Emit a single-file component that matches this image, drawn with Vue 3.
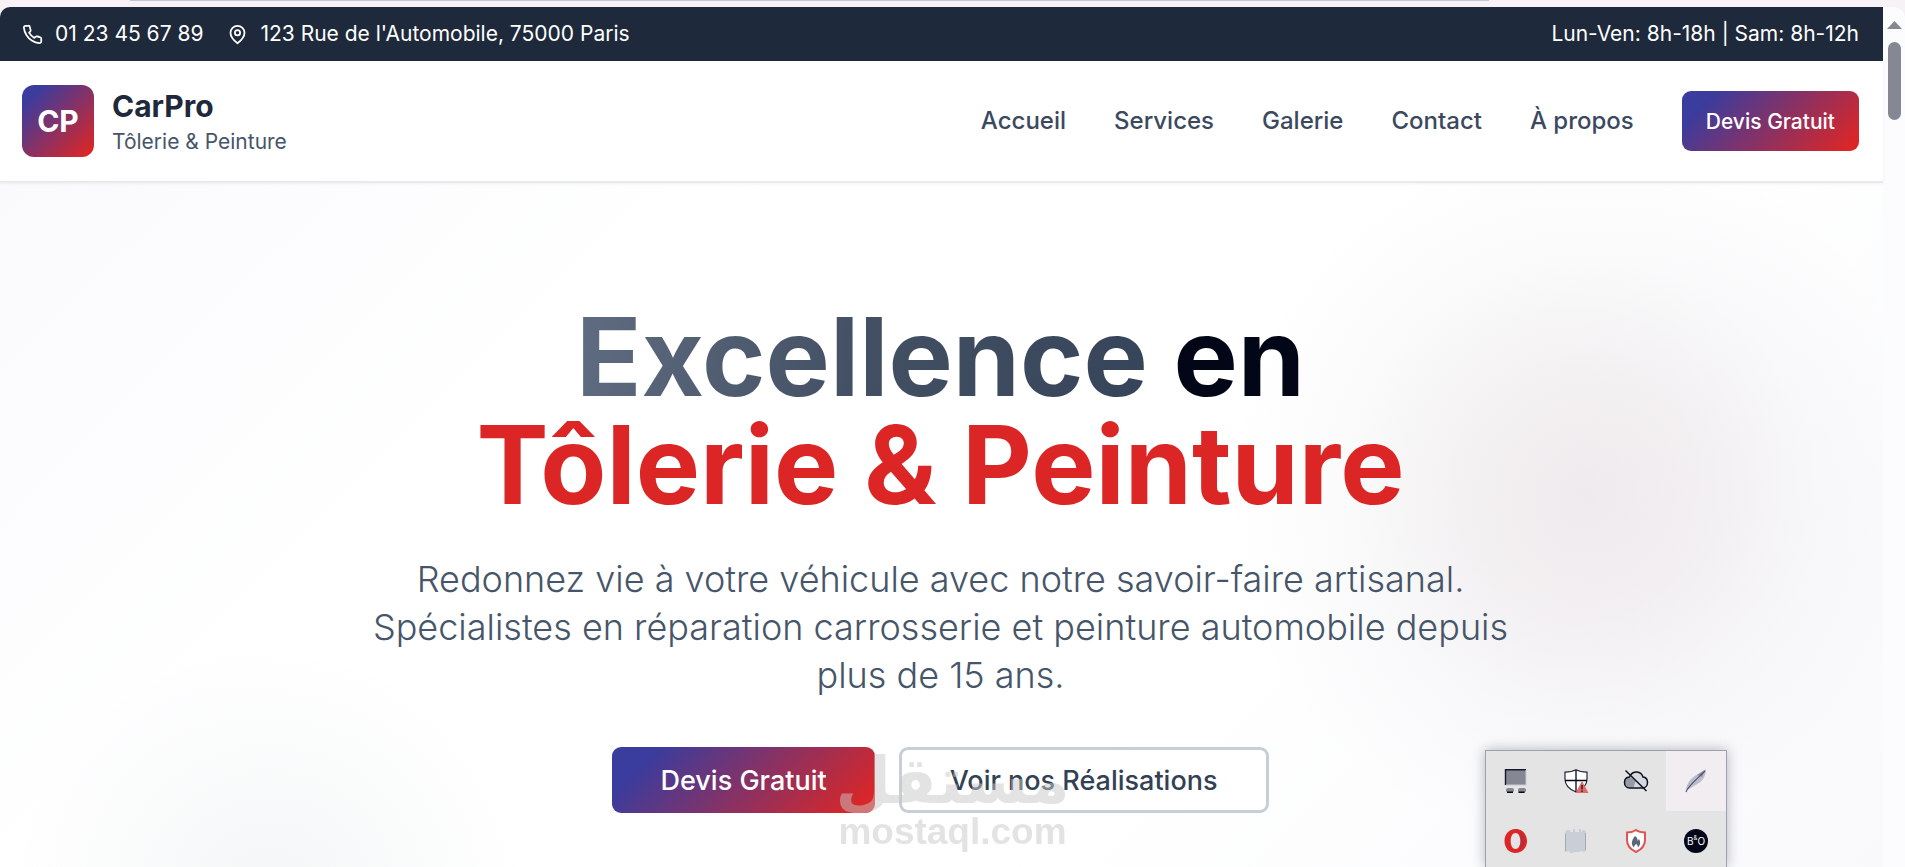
<script setup>
const links = ['Accueil', 'Services', 'Galerie', 'Contact', 'À propos']
</script>

<template>
  <div class="window">
    <div class="chrome"><span class="chrome-line"></span></div>
    <div class="viewport">
      <div class="page">
        <div class="topbar">
          <div class="contact">
            <span class="item">
              <svg class="ico" viewBox="0 0 24 24" aria-hidden="true"><path d="M22 16.92v3a2 2 0 0 1-2.18 2 19.79 19.79 0 0 1-8.63-3.07 19.5 19.5 0 0 1-6-6 19.79 19.79 0 0 1-3.07-8.67A2 2 0 0 1 4.11 2h3a2 2 0 0 1 2 1.72 12.84 12.84 0 0 0 .7 2.81 2 2 0 0 1-.45 2.11L8.09 9.91a16 16 0 0 0 6 6l1.27-1.27a2 2 0 0 1 2.11-.45 12.84 12.84 0 0 0 2.81.7A2 2 0 0 1 22 16.92z" /></svg>
              <span>01 23 45 67 89</span>
            </span>
            <span class="item">
              <svg class="ico" viewBox="0 0 24 24" aria-hidden="true"><path d="M20 10c0 6-8 12-8 12s-8-6-8-12a8 8 0 0 1 16 0Z" /><circle cx="12" cy="10" r="3" /></svg>
              <span>123 Rue de l'Automobile, 75000 Paris</span>
            </span>
          </div>
          <span>Lun-Ven: 8h-18h | Sam: 8h-12h</span>
        </div>

        <header class="header">
          <div class="brand">
            <div class="logo">CP</div>
            <div>
              <div class="name">CarPro</div>
              <div class="tagline">Tôlerie &amp; Peinture</div>
            </div>
          </div>
          <nav class="nav">
            <a v-for="l in links" :key="l" href="#">{{ l }}</a>
            <button class="cta small" type="button">Devis Gratuit</button>
          </nav>
        </header>

        <main class="hero">
          <h1><span class="fade">Excellence</span> en<br /><span class="red">Tôlerie &amp; Peinture</span></h1>
          <p>Redonnez vie à votre véhicule avec notre savoir-faire artisanal. Spécialistes en réparation carrosserie et peinture automobile depuis plus de 15 ans.</p>
          <div class="actions">
            <button class="cta" type="button">Devis Gratuit</button>
            <button class="outline" type="button">Voir nos Réalisations</button>
          </div>
        </main>
      </div>

      <div class="scrollbar" aria-hidden="true">
        <svg class="arrow" viewBox="0 0 15 8"><path d="M7.500 0L15 8H0z" /></svg>
        <div class="thumb"></div>
      </div>
    </div>

    <div class="watermark">
      <div class="wm-ar" lang="ar" dir="rtl">مستقل</div>
      <div class="wm-en">mostaql.com</div>
    </div>

    <div class="tray">
      <div class="cell">
        <svg viewBox="0 0 24 24"><rect x="1" y="0" width="21" height="16" fill="#858792" /><path d="M1.500 16V.7H22" fill="none" stroke="#141a2c" stroke-width="1.400" /><path d="M22 1v15H2" fill="none" stroke="#c6cad3" stroke-width="1" /><rect x="2" y="19" width="8" height="4.500" rx="2" fill="#858792" /><rect x="14" y="19" width="8" height="4.500" rx="2" fill="#858792" /><path d="M3 23.300h6M14.500 23.300h6" stroke="#020617" stroke-width="1.400" /></svg>
      </div>
      <div class="cell">
        <svg viewBox="0 0 24 24"><path d="M12 .8C9 2.500 5 3.200 1 3.200V10c0 6 4.500 10.500 11 13 6.500-2.500 11-7 11-13V3.200C19 3.200 15 2.500 12 .8z" fill="#fff" stroke="#1e293b" stroke-width="1.200" /><path d="M12 1v22M1 11.500h22" stroke="#020617" stroke-width="1.300" /><path d="M18 12l6.500 12h-13z" fill="#e06a66" /><path d="M18 16v4.500M18 21.500v1.500" stroke="#020617" stroke-width="1.200" /></svg>
      </div>
      <div class="cell">
        <svg viewBox="0 0 24 24"><path d="M5.500 19C2.500 19 .5 16.500 .5 13.500S2.500 8.200 5.500 8C7 4.500 10 2.800 13 3c3 .2 5 2 6 5 3 .3 4.500 2.500 4.500 5.500S21.500 19 18.500 19z" fill="#d7d9df" /><path d="M5.500 8.500c3 0 5 2 6 4l-2 6h-4a5 5 0 0 1 0-10z" fill="#9a9ca5" /><path d="M5.500 19C2.500 19 .5 16.500 .5 13.500S2.500 8.200 5.500 8C7 4.500 10 2.800 13 3c3 .2 5 2 6 5 3 .3 4.500 2.500 4.500 5.500S21.500 19 18.500 19z" fill="none" stroke="#0b1222" stroke-width="1.500" /><path d="M1.500 1.500l21 20.500" stroke="#0b1222" stroke-width="1.500" /></svg>
      </div>
      <div class="cell active">
        <svg viewBox="0 0 24 24"><path d="M2 21C3 13 8 8 14 5l8-5c0 6-3 12-8 14.500L5 20z" fill="#b9bdc7" /><path d="M13 6l8-5-3 7z" fill="#8f929d" /><path d="M2 23C4 17 12 11 21 2" fill="none" stroke="#594b78" stroke-width="1.200" /></svg>
      </div>
      <div class="cell">
        <svg viewBox="0 0 24 24"><path d="M11.500 0C5 0 .5 5 .5 12s4.500 12 11 12S23 19 23 12 18 0 11.500 0zm0 4c3 0 4.800 3.500 4.800 8s-1.800 8-4.800 8-4.800-3.500-4.800-8 1.800-8 4.800-8z" fill="#dc2626" fill-rule="evenodd" /><path d="M14 2.500c4 2 6 5.500 6 9.500s-2 7.500-6 9.500c2.500-2 3.500-5.500 3.500-9.500S16.500 4.500 14 2.500z" fill="#a83048" /></svg>
      </div>
      <div class="cell">
        <svg viewBox="0 0 24 24"><path d="M1 3l2-2h3v2h3V0h2v3h4V0h2v3l2-2 3 1v20l-3 1-1-1-3 1h-4l-2 1H6l-1-2-4 1z" fill="#c9ced7" /><path d="M1.500 5v17M21.500 4v17" stroke="#a4a9b8" stroke-width="1" /></svg>
      </div>
      <div class="cell">
        <svg viewBox="0 0 24 24"><path d="M12 1C9.500 2.800 6 3.500 3 3.500V11c0 5.500 3.500 9.500 9 12 5.500-2.500 9-6.500 9-12V3.500C18 3.500 14.500 2.800 12 1z" fill="#fff" stroke="#df5552" stroke-width="2" /><path d="M11 7c3 2 2.500 4 2.500 5l1.500-2c2 3 1.500 6-1 8.500 0-2-1-3-2-3.500-1 1-2 2-2 3.500C7 16 7 12 11 7z" fill="#58667a" /></svg>
      </div>
      <div class="cell">
        <div class="bo"><span>B</span><span class="amp">&amp;</span><span>O</span></div>
      </div>
    </div>
  </div>
</template>

<style>
body { margin: 0; background: #f6f2f6; }
</style>

<style scoped>
* { box-sizing: border-box; }
.window {
  position: relative;
  height: 100vh;
  overflow: hidden;
  display: flex;
  flex-direction: column;
  font-family: Inter, "Liberation Sans", sans-serif;
  background: #f6f2f6;
}
.chrome { flex: none; height: 7px; padding: 0 416px 0 130px; }
.chrome-line { display: block; height: 1px; background: #c3c5d0; }
.viewport { flex: 1; display: flex; min-height: 0; border-radius: 10px 12px 0 0; overflow: hidden; background: #fcfbfd; }
.page { flex: 1; min-width: 0; display: flex; flex-direction: column; background: #fff; }
.topbar {
  display: flex;
  justify-content: space-between;
  padding: 12px 24px 12px 22px;
  background: #1e293b;
  color: #fff;
  font-size: 21px;
  line-height: 30px;
}
.contact { display: flex; gap: 24px; }
.item { display: flex; align-items: center; gap: 12px; }
.ico { width: 21px; height: 21px; fill: none; stroke: currentColor; stroke-width: 2; stroke-linecap: round; stroke-linejoin: round; }
.header {
  display: flex;
  justify-content: space-between;
  align-items: center;
  padding: 24px 24px 24px 22px;
  border-bottom: 2px solid #ebe9ee;
  box-shadow: 0 1px 3px rgba(15, 23, 42, .05);
  z-index: 1;
}
.brand { display: flex; align-items: center; gap: 18px; }
.logo {
  display: grid;
  place-items: center;
  width: 72px;
  height: 72px;
  border-radius: 12px;
  background: linear-gradient(135deg, #3a3c9e 14%, #dc2626 95%);
  color: #fff;
  font-size: 30px;
  font-weight: 700;
}
.name { font-size: 30px; line-height: 42px; font-weight: 700; color: #1e293b; }
.tagline { font-size: 21px; line-height: 30px; color: #475569; }
.nav { display: flex; align-items: center; gap: 48px; }
.nav a { font-size: 24px; line-height: 36px; font-weight: 500; color: #3b495e; text-decoration: none; }
button { font-family: inherit; font-weight: 500; font-size: 27px; height: 66px; padding: 0 48px; border-radius: 9px; cursor: pointer; }
.cta { border: 0; color: #fff; background: linear-gradient(135deg, #3a3c9e 14%, #dc2626 95%); }
.cta.small { font-size: 21px; height: 60px; padding: 0 24px; }
.outline { border: 3px solid #c8ced6; background: #fff; color: #334155; }
.hero {
  flex: 1;
  padding: 120px 24px 0 22px;
  text-align: center;
  background:
    radial-gradient(circle 360px at 1584px 310px, rgba(90, 30, 60, .085), rgba(90, 30, 60, .06) 35%, rgba(70, 50, 100, .025) 65%, rgba(70, 60, 120, 0)),
    radial-gradient(circle 260px at 270px 720px, rgba(60, 60, 90, .05), rgba(60, 60, 120, .02) 60%, rgba(60, 60, 120, 0)),
    linear-gradient(135deg, #fafafd, #fefffe 30%, #fefffe 65%, #f9f9fc);
}
h1 { margin: 0; font-size: 108px; line-height: 108px; font-weight: 700; color: #020617; }
.fade { color: transparent; background: linear-gradient(100deg, #606c81, #435063 50%, #36445a); -webkit-background-clip: text; background-clip: text; }
.red { color: #dc2626; }
p { max-width: 1152px; margin: 36px auto 48px; font-size: 36px; line-height: 48px; font-weight: 300; color: #475569; }
.actions { display: flex; justify-content: center; gap: 24px; }
.scrollbar { flex: none; width: 22px; display: flex; flex-direction: column; align-items: center; gap: 13px; padding-top: 14px; background: #fcfbfd; }
.arrow { width: 15px; height: 8px; fill: #858792; }
.thumb { width: 13px; height: 78px; border-radius: 7px; background: #858792; }
.watermark {
  position: absolute;
  left: 0;
  right: 0;
  bottom: 14px;
  text-align: center;
  font-weight: 700;
  color: rgb(200, 200, 200);
  opacity: .5;
  pointer-events: none;
}
.wm-ar { font-family: "DejaVu Sans", sans-serif; font-size: 64px; line-height: 60px; }
.wm-en { font-family: "Liberation Sans", sans-serif; font-size: 37px; line-height: 42px; }
.tray {
  position: absolute;
  right: 178px;
  bottom: 0;
  width: 242px;
  height: 117px;
  display: grid;
  grid-template-columns: repeat(4, 1fr);
  grid-auto-rows: 60px;
  border: 1px solid #9ca1b0;
  border-bottom: 0;
  background: #e4e4e4;
  box-shadow: 0 0 12px rgba(15, 23, 42, .3);
}
.cell { display: grid; place-items: center; }
.cell svg { width: 24px; height: 24px; overflow: visible; }
.active { background: #f1edf1; }
.bo { display: flex; justify-content: center; width: 24px; height: 24px; border-radius: 50%; background: #020617; color: #fff; font-size: 10px; line-height: 24px; font-weight: 400; }
.amp { font-size: 6px; line-height: 18px; }
</style>
